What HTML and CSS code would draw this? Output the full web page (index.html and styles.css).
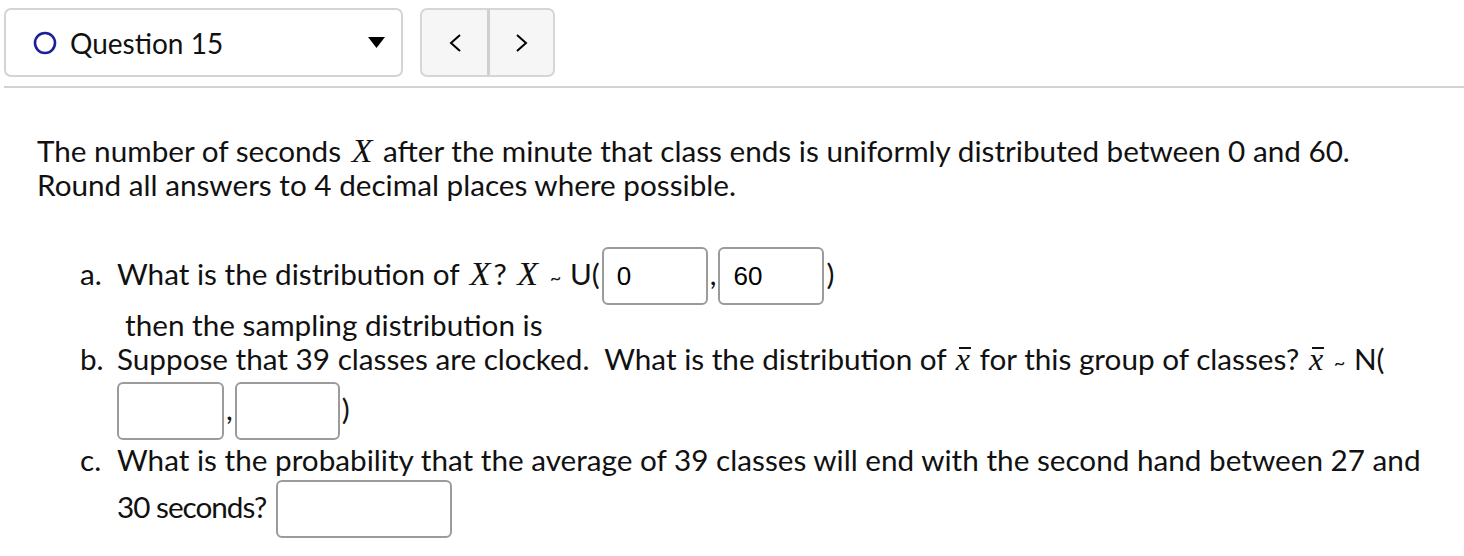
FILE: index.html
```html
<!DOCTYPE html>
<html lang="en">
<head>
<meta charset="utf-8">
<title>Question 15</title>
<link rel="stylesheet" href="styles.css">
</head>
<body>
<header class="topbar">
  <div class="qselect">
    <svg class="status" width="24" height="24" viewBox="0 0 24 24"><circle cx="12" cy="12" r="10" fill="none" stroke="#1c1f9a" stroke-width="2.6"/></svg>
    <span class="qname">Question 15</span>
    <svg class="caret" width="17" height="11" viewBox="0 0 17 11"><polygon points="0,0 17,0 8.5,11" fill="#000"/></svg>
  </div>
  <div class="qnav">
    <button class="navbtn prev" type="button"><svg width="14" height="18" viewBox="0 0 14 18"><polyline points="12,1 3,9 12,17" fill="none" stroke="#000" stroke-width="2"/></svg></button>
    <button class="navbtn next" type="button"><svg width="14" height="18" viewBox="0 0 14 18"><polyline points="2,1 11,9 2,17" fill="none" stroke="#000" stroke-width="2"/></svg></button>
  </div>
</header>
<div class="rule"></div>
<main class="question">
  <p class="intro">The number of seconds <span class="mvar">X</span> after the minute that class ends is uniformly distributed between 0 and 60.<br>Round all answers to 4 decimal places where possible.</p>
  <div class="parts">
    <div class="part">
      <span class="mk">a.</span>
      <div class="body">What is the distribution of <span class="mvar">X</span>? <span class="mvar">X</span> <span class="tilde">~</span> U(<input class="ans" value="0" readonly>,<input class="ans" value="60" readonly>)
        <div class="then">then the sampling distribution is</div>
      </div>
    </div>
    <div class="part">
      <span class="mk">b.</span>
      <div class="body">Suppose that 39 classes are clocked.&nbsp; What is the distribution of <span class="mvar xbar">x</span> for this group of classes? <span class="mvar xbar">x</span> <span class="tilde">~</span> N( <input class="ans b1" readonly>,<input class="ans b2" readonly>)</div>
    </div>
    <div class="part">
      <span class="mk">c.</span>
      <div class="body">What is the probability that the average of 39 classes will end with the second hand between 27 and <span class="tight">30 seconds?</span> <input class="ans wide" readonly></div>
    </div>
  </div>
</main>
</body>
</html>
```
FILE: styles.css
```css
body {
  margin: 0;
  font-family: Lato, "Liberation Sans", sans-serif;
  color: #111;
  background: #fff;
}

.topbar {
  display: flex;
  gap: 17px;
  padding: 8px 0 0 4px;
}

.qselect {
  box-sizing: border-box;
  width: 399px;
  height: 69px;
  border: 2px solid #d4d4d4;
  border-radius: 7px;
  display: flex;
  align-items: center;
  padding: 0 16px 0 27px;
  font-size: 28px;
}

.status {
  margin-right: 13px;
  flex: none;
}

.caret {
  margin-left: auto;
  flex: none;
}

.qnav {
  box-sizing: border-box;
  width: 135px;
  height: 69px;
  display: flex;
  border: 2px solid #d6d6d6;
  border-radius: 7px;
  background: #f6f6f6;
  overflow: hidden;
}

.navbtn {
  border: 0;
  background: transparent;
  padding: 0;
  display: flex;
  align-items: center;
  justify-content: center;
}

.prev {
  width: 65px;
}

.next {
  flex: 1;
  border-left: 3px solid #cfcfcf;
}

.rule {
  height: 2px;
  background: #d2d2d2;
  margin: 9px 0 0 4px;
}

.question {
  padding: 0 30px 0 37px;
  font-size: 29.7px;
  line-height: 34px;
}

.intro {
  margin: 46px 0 0;
}

.parts {
  margin-top: 42px;
  padding-left: 43px;
}

.part {
  display: grid;
  grid-template-columns: 37px 1fr;
  align-items: baseline;
}

.then {
  padding-left: 8px;
}

.tight {
  letter-spacing: -1px;
}

.mvar {
  font-family: "Liberation Serif", serif;
  font-style: italic;
  font-size: 34px;
  padding: 0 3px;
}

.xbar {
  position: relative;
  font-size: 32px;
  padding: 0 2px;
}

.xbar::before {
  content: "";
  position: absolute;
  left: 5px;
  right: 1px;
  top: 6px;
  height: 1.5px;
  background: #111;
}

.tilde {
  font-size: 20px;
  padding: 0 1px;
}

.ans {
  box-sizing: border-box;
  width: 106px;
  height: 58px;
  margin: 3px 2px 3px;
  padding: 0 13px;
  border: 2px solid #9b9b9b;
  border-radius: 6px;
  background: #fff;
  font-family: "Liberation Sans", Arial, sans-serif;
  font-size: 26px;
  color: #000;
  vertical-align: baseline;
  outline: none;
}

.b1 {
  width: 107px;
  margin-left: 0;
}

.b2 {
  width: 105px;
}

.wide {
  width: 176px;
}
```
